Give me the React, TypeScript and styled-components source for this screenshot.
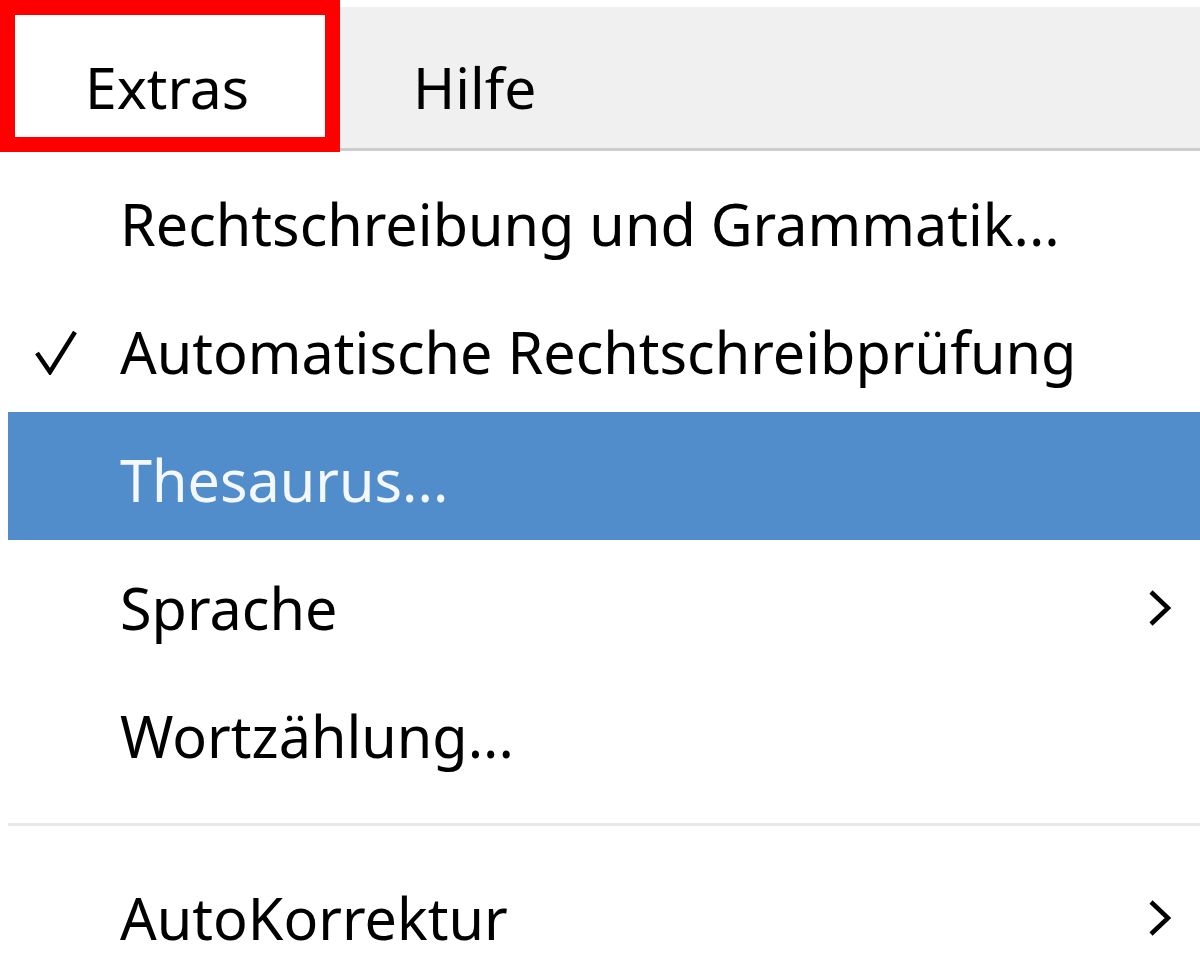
import React from "react";
import styled, { createGlobalStyle } from "styled-components";

const GlobalStyle = createGlobalStyle`
  html, body {
    margin: 0;
    padding: 0;
    background: #ffffff;
    overflow: hidden;
  }
  body {
    font-family: "Noto Sans", "Open Sans", sans-serif;
    color: #000000;
  }
`;

const Page = styled.div`
  width: 1200px;
  height: 979px;
  overflow: hidden;
  background: #ffffff;
`;

const MenuBar = styled.div`
  display: flex;
  height: 141px;
  margin-top: 7px;
  background: #f0f0f0;
  border-bottom: 3px solid #cdcdcd;
`;

const BarItem = styled.div<{ $active?: boolean }>`
  display: flex;
  align-items: center;
  box-sizing: border-box;
  font-size: 57px;
  line-height: 1;
  padding: ${(p) => (p.$active ? "22px 82px 0 70px" : "19px 0 0 73px")};
  ${(p) =>
    p.$active &&
    `
    margin-top: -7px;
    margin-bottom: -4px;
    width: 340px;
    background: #ffffff;
    border: 15px solid #ff0000;
  `}
`;

const Menu = styled.div`
  display: flex;
  flex-direction: column;
  margin-left: 8px;
  padding-top: 5px;
`;

const Item = styled.div<{ $highlight?: boolean }>`
  display: flex;
  align-items: center;
  box-sizing: border-box;
  height: 128px;
  padding-top: 8px;
  font-size: 57.5px;
  background: ${(p) => (p.$highlight ? "#518dcb" : "transparent")};
  color: ${(p) => (p.$highlight ? "#f4f7fb" : "#000000")};
`;

const CheckCell = styled.span`
  width: 112px;
  flex: none;
  display: flex;
  align-items: center;
  padding-left: 26px;
  box-sizing: border-box;
`;

const Label = styled.span`
  flex: 1;
  white-space: nowrap;
`;

const Arrow = styled.svg`
  width: 28px;
  height: 40px;
  margin-right: 26px;
  flex: none;
`;

const Separator = styled.div`
  height: 3px;
  background: #e8e8e8;
  margin: 27px 0 24px;
`;

type Entry = { label: string; checked?: boolean; sub?: boolean; highlight?: boolean };

const groups: Entry[][] = [
  [
    { label: "Rechtschreibung und Grammatik..." },
    { label: "Automatische Rechtschreibprüfung", checked: true },
    { label: "Thesaurus...", highlight: true },
    { label: "Sprache", sub: true },
    { label: "Wortzählung..." },
  ],
  [{ label: "AutoKorrektur", sub: true }],
];

const Chevron = () => (
  <Arrow viewBox="0 0 28 40">
    <path d="M5 4 L22 20 L5 36" fill="none" stroke="#000" strokeWidth="4.5" />
  </Arrow>
);

const CheckMark = () => (
  <svg width="44" height="46" viewBox="0 0 44 46">
    <path
      d="M3 24 L16 43 L41 3"
      fill="none"
      stroke="#000"
      strokeWidth="4.5"
      strokeLinejoin="miter"
    />
  </svg>
);

export default function App() {
  return (
    <Page>
      <GlobalStyle />
      <MenuBar>
        <BarItem $active>Extras</BarItem>
        <BarItem>Hilfe</BarItem>
      </MenuBar>
      <Menu>
        {groups.map((group, gi) => (
          <React.Fragment key={gi}>
            {gi > 0 && <Separator />}
            {group.map((e) => (
              <Item key={e.label} $highlight={e.highlight}>
                <CheckCell>{e.checked && <CheckMark />}</CheckCell>
                <Label>{e.label}</Label>
                {e.sub && <Chevron />}
              </Item>
            ))}
          </React.Fragment>
        ))}
      </Menu>
    </Page>
  );
}
